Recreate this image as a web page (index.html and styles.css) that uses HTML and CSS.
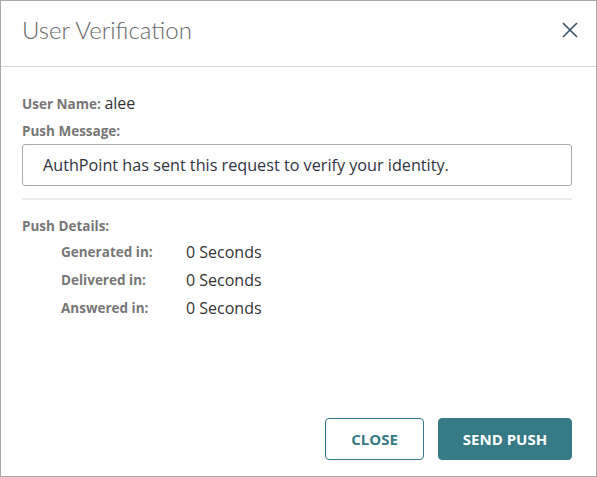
FILE: index.html
```html
<!DOCTYPE html>
<html lang="en">
<head>
    <meta charset="UTF-8">
    <meta name="viewport" content="width=device-width, initial-scale=1.0">
    <title>User Verification</title>
    <link rel="stylesheet" href="styles.css">
</head>
<body>
    <div class="dialog">
        <div class="dialog-header">
            <h1>User Verification</h1>
            <button class="close-icon" aria-label="Close">
                <svg width="18" height="18" viewBox="0 0 18 18">
                    <path d="M2 2 L16 16 M16 2 L2 16" stroke="#3d5566" stroke-width="1.7" fill="none"/>
                </svg>
            </button>
        </div>

        <div class="dialog-body">
            <div class="field-line">
                <span class="label">User Name:</span> <span class="value">alee</span>
            </div>
            <div class="field-line label message-title">Push Message:</div>
            <div class="message-box">AuthPoint has sent this request to verify your identity.</div>

            <hr class="divider">

            <div class="field-line label details-title">Push Details:</div>
            <div class="details">
                <span class="label">Generated in:</span>
                <span class="value">0 Seconds</span>
                <span class="label">Delivered in:</span>
                <span class="value">0 Seconds</span>
                <span class="label">Answered in:</span>
                <span class="value">0 Seconds</span>
            </div>
        </div>

        <div class="dialog-footer">
            <button class="btn btn-outline">CLOSE</button>
            <button class="btn btn-primary">SEND PUSH</button>
        </div>
    </div>
</body>
</html>
```

FILE: styles.css
```css
* {
    box-sizing: border-box;
}

body {
    margin: 0;
    font-family: 'Open Sans', 'Liberation Sans', sans-serif;
    background: #fff;
}

.dialog {
    width: 597px;
    height: 477px;
    border: 1px solid #a9a9a9;
    display: flex;
    flex-direction: column;
}

.dialog-header {
    height: 66px;
    border-bottom: 1px solid #d4d4d4;
    display: flex;
    align-items: center;
    justify-content: space-between;
    padding: 0 17px 0 21px;
}

.dialog-header h1 {
    margin: 0 0 8px;
    font-family: 'Lato', 'Open Sans', sans-serif;
    font-weight: 300;
    font-size: 24px;
    color: #666;
}

.close-icon {
    background: none;
    border: none;
    padding: 0;
    width: 18px;
    height: 18px;
    cursor: pointer;
    margin-bottom: 8px;
}

.dialog-body {
    flex: 1;
    padding: 25px 24px 0 21px;
}

.field-line {
    font-size: 14px;
    line-height: 22px;
    margin-bottom: 5px;
}

.label {
    font-size: 13.5px;
    font-weight: 700;
    color: #767676;
}

.value {
    font-size: 16px;
    color: #333;
}

.message-title {
    margin-bottom: 0;
}

.message-box {
    margin-top: 2px;
    height: 42px;
    border: 1px solid #aaa;
    border-radius: 3px;
    padding: 0 20px;
    display: flex;
    align-items: center;
    font-size: 16.2px;
    color: #2e3441;
}

.divider {
    border: none;
    border-top: 2px solid #ebebeb;
    margin: 12px 0 15px;
}

.details-title {
    margin-bottom: 1px;
}

.details {
    display: grid;
    grid-template-columns: 125px auto;
    grid-auto-rows: 28px;
    align-items: center;
    padding-left: 39px;
}

.dialog-footer {
    display: flex;
    justify-content: flex-end;
    gap: 14px;
    padding: 0 24px 16px 0;
}

.btn {
    height: 42px;
    border-radius: 4px;
    font-family: 'Open Sans', sans-serif;
    font-size: 15px;
    font-weight: 700;
    cursor: pointer;
}

.btn-outline {
    width: 99px;
    background: #fff;
    border: 1px solid #367a85;
    color: #367a85;
}

.btn-primary {
    width: 134px;
    background: #367a85;
    border: 1px solid #367a85;
    color: #fff;
}
```
